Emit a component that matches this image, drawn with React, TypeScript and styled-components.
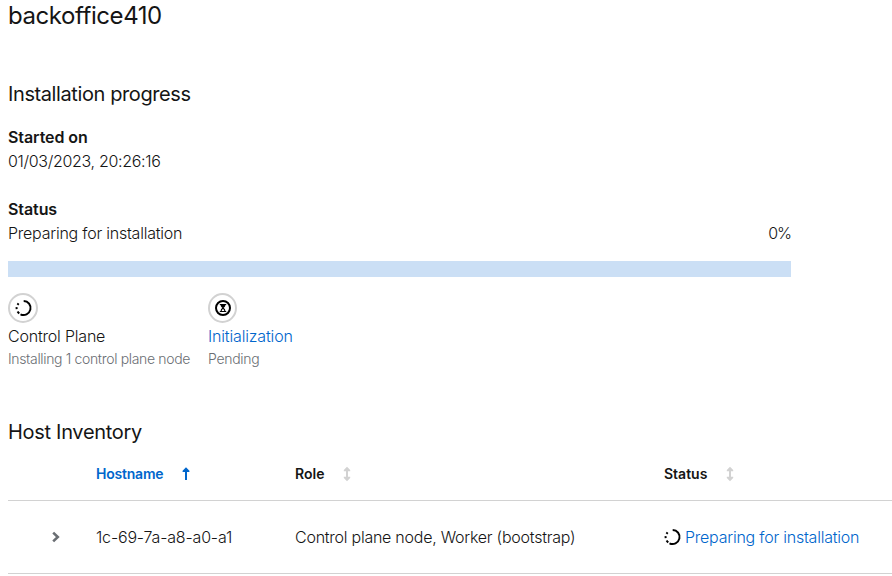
import React from 'react';
import styled, { createGlobalStyle } from 'styled-components';

const Global = createGlobalStyle`
  * { box-sizing: border-box; }
  body { margin: 0; background: #fff; color: #151515; overflow: hidden; }
`;

const Page = styled.main`
  width: 892px;
  height: 576px;
  padding-left: 8px;
  overflow: hidden;
  font: 300 16px/24px Inter, "Liberation Sans", sans-serif;
  white-space: nowrap;
`;

const Title = styled.h1`
  margin: 0 0 50px;
  font-size: 24px;
  font-weight: 400;
  line-height: 31px;
  letter-spacing: -0.43px;
`;

const Heading = styled.h2<{ $track: number }>`
  margin: 0;
  font-size: 20px;
  font-weight: 400;
  line-height: 26px;
  letter-spacing: ${(p) => p.$track}px;
`;

const Progress = styled.section`
  display: flex;
  flex-direction: column;
  width: 783px;
  margin-top: 18px;
`;

const Label = styled.div`
  font-weight: 600;
  letter-spacing: -0.08px;
`;

const Text = styled.span<{ $track: number; $link?: boolean }>`
  letter-spacing: ${(p) => p.$track}px;
  color: ${(p) => (p.$link ? '#0066cc' : 'inherit')};
`;

const DateLine = styled.div`
  margin-bottom: 24px;
`;

const StatusLine = styled.div`
  display: flex;
  justify-content: space-between;
`;

const Bar = styled.div`
  height: 16px;
  margin: 16px 0;
  background: #cbdff5;
`;

const Steps = styled.div`
  display: grid;
  grid-template-columns: 200px 200px;
  height: 77px;
`;

const Step = styled.div`
  display: flex;
  flex-direction: column;
`;

const StepIcon = styled.div<{ $width: number }>`
  display: flex;
  align-items: center;
  justify-content: center;
  width: ${(p) => p.$width}px;
  height: 30px;
  margin-bottom: 1px;
  border: 2px solid #d2d2d2;
  border-radius: 50%;
`;

const Description = styled.div<{ $track: number }>`
  font-size: 14px;
  line-height: 21px;
  color: #6a6e73;
  letter-spacing: ${(p) => p.$track}px;
`;

const Inventory = styled.section`
  margin-top: 49px;
`;

const Row = styled.div<{ $header?: boolean }>`
  display: grid;
  grid-template-columns: 88px 199px 369px 1fr;
  align-items: center;
  height: ${(p) => (p.$header ? 56 : 73)}px;
  border-bottom: 1px solid #d2d2d2;
  ${(p) => p.$header && 'padding-top: 3px;'}
`;

const Column = styled.div<{ $active?: boolean; $gap: number; $track?: number }>`
  display: flex;
  align-items: center;
  gap: ${(p) => p.$gap}px;
  font-size: 14px;
  font-weight: 600;
  letter-spacing: ${(p) => p.$track ?? 0}px;
  color: ${(p) => (p.$active ? '#0066cc' : '#151515')};
`;

const Toggle = styled.div`
  display: flex;
  padding-left: 43px;
`;

const State = styled.div`
  display: flex;
  align-items: center;
  gap: 4px;
`;

const Icon = styled.svg`
  display: block;
  flex: none;
  overflow: visible;
`;

const InProgressIcon = () => (
  <Icon width="17" height="16" viewBox="0 0 17 16" fill="none" stroke="#000" strokeWidth="2">
    <path d="M8.7 1a7 7 0 1 1-3.2 13.3" />
    <path d="M4.3 13.4a7 7 0 0 1-1.7-2M1.7 9.2a7 7 0 0 1-.05-2.1M2.5 4.9l1.1-1.5" />
  </Icon>
);

const PendingIcon = () => (
  <Icon width="16" height="16" viewBox="0 0 16 16" fill="none" stroke="#000">
    <circle cx="8" cy="8" r="7" strokeWidth="2" />
    <path d="M4.8 4.5h6.4M4.8 11.5h6.4" strokeWidth="1.2" />
    <path d="M5.5 4.5c0 2 1 2.9 2.5 3.7c1.5-.8 2.5-1.7 2.5-3.7z" fill="#000" stroke="none" />
    <path d="M6 11.5c0-1.8.8-2.6 2-3.5c1.2.9 2 1.7 2 3.5" strokeWidth="1.1" />
  </Icon>
);

const SortUpIcon = () => (
  <Icon width="8" height="14" viewBox="0 0 8 14" fill="#0066cc">
    <path d="M4 .2 7.4 3.8V5H5v8H3V5H.6V3.8z" />
  </Icon>
);

const SortIcon = () => (
  <Icon width="8" height="16" viewBox="0 0 8 16" fill="#d2d2d2">
    <path d="M4 .8 7.2 4v1.2H5v5.6h2.2V12L4 15.2.8 12v-1.2H3V5.2H.8V4z" />
  </Icon>
);

const SortSlot = styled.span<{ $lift: number }>`
  display: flex;
  padding-bottom: ${(p) => p.$lift}px;
`;

const ChevronIcon = () => (
  <Icon width="10" height="12" viewBox="0 0 10 12" fill="none" stroke="#6a6e73" strokeWidth="2.6">
    <path d="M2.2 1.6 6.8 6 2.2 10.4" />
  </Icon>
);

export default function App() {
  return (
    <Page>
      <Global />
      <Title>backoffice410</Title>
      <Heading $track={-0.4}>Installation progress</Heading>
      <Progress>
        <Label>Started on</Label>
        <DateLine><Text $track={-0.32}>01/03/2023, 20:26:16</Text></DateLine>
        <Label>Status</Label>
        <StatusLine>
          <Text $track={-0.23}>Preparing for installation</Text>
          <Text $track={-1}>0%</Text>
        </StatusLine>
        <Bar />
        <Steps>
          <Step>
            <StepIcon $width={30}><InProgressIcon /></StepIcon>
            <Text $track={-0.2}>Control Plane</Text>
            <Description $track={-0.34}>Installing 1 control plane node</Description>
          </Step>
          <Step>
            <StepIcon $width={29}><PendingIcon /></StepIcon>
            <Text $track={-0.16} $link>Initialization</Text>
            <Description $track={-0.3}>Pending</Description>
          </Step>
        </Steps>
      </Progress>
      <Inventory>
        <Heading $track={-0.3}>Host Inventory</Heading>
        <Row $header>
          <span />
          <Column $active $gap={19} $track={-0.22}>
            Hostname
            <SortSlot $lift={1}><SortUpIcon /></SortSlot>
          </Column>
          <Column $gap={19}>
            Role
            <SortSlot $lift={1}><SortIcon /></SortSlot>
          </Column>
          <Column $gap={19}>
            Status
            <SortSlot $lift={1}><SortIcon /></SortSlot>
          </Column>
        </Row>
        <Row>
          <Toggle><ChevronIcon /></Toggle>
          <Text $track={-0.18}>1c-69-7a-a8-a0-a1</Text>
          <Text $track={-0.25}>Control plane node, Worker (bootstrap)</Text>
          <State>
            <InProgressIcon />
            <Text $track={-0.23} $link>Preparing for installation</Text>
          </State>
        </Row>
      </Inventory>
    </Page>
  );
}
